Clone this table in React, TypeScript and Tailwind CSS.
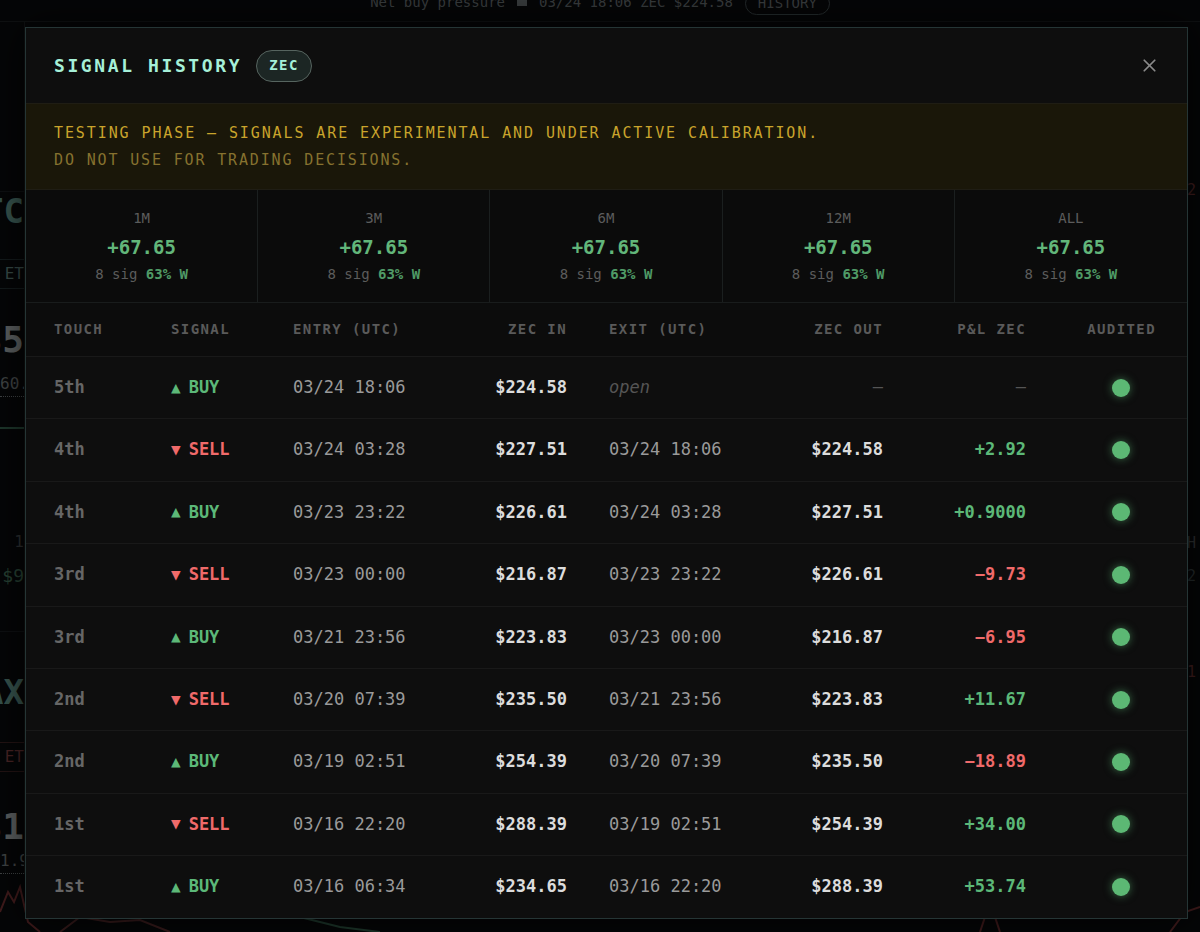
import { X } from 'lucide-react'

type Row = {
  touch: string
  side: 'BUY' | 'SELL'
  entry: string
  zecIn: string
  exit: string | null
  zecOut: string | null
  pnl: string | null
}

const rows: Row[] = [
  { touch: '5th', side: 'BUY', entry: '03/24 18:06', zecIn: '$224.58', exit: null, zecOut: null, pnl: null },
  { touch: '4th', side: 'SELL', entry: '03/24 03:28', zecIn: '$227.51', exit: '03/24 18:06', zecOut: '$224.58', pnl: '+2.92' },
  { touch: '4th', side: 'BUY', entry: '03/23 23:22', zecIn: '$226.61', exit: '03/24 03:28', zecOut: '$227.51', pnl: '+0.9000' },
  { touch: '3rd', side: 'SELL', entry: '03/23 00:00', zecIn: '$216.87', exit: '03/23 23:22', zecOut: '$226.61', pnl: '-9.73' },
  { touch: '3rd', side: 'BUY', entry: '03/21 23:56', zecIn: '$223.83', exit: '03/23 00:00', zecOut: '$216.87', pnl: '-6.95' },
  { touch: '2nd', side: 'SELL', entry: '03/20 07:39', zecIn: '$235.50', exit: '03/21 23:56', zecOut: '$223.83', pnl: '+11.67' },
  { touch: '2nd', side: 'BUY', entry: '03/19 02:51', zecIn: '$254.39', exit: '03/20 07:39', zecOut: '$235.50', pnl: '-18.89' },
  { touch: '1st', side: 'SELL', entry: '03/16 22:20', zecIn: '$288.39', exit: '03/19 02:51', zecOut: '$254.39', pnl: '+34.00' },
  { touch: '1st', side: 'BUY', entry: '03/16 06:34', zecIn: '$234.65', exit: '03/16 22:20', zecOut: '$288.39', pnl: '+53.74' },
]

const periods = ['1M', '3M', '6M', '12M', 'ALL']

const cols = 'grid grid-cols-[117px_122px_167px_107px_193px_123px_143px_1fr] items-center pl-[28px] pr-[31px]'

function Backdrop() {
  // dimmed dashboard that sits behind the dialog
  return (
    <div className="h-[932px] w-[1200px] overflow-hidden bg-[#050607] opacity-60">
      <div className="flex h-[30px] items-start justify-center gap-3 border-b border-[#16191a] -mt-[8px] text-[14px] text-[#5b6062]">
        <span>Net buy pressure</span>
        <span className="mt-[4px] h-[10px] w-[10px] bg-[#5b6062]"></span>
        <span>03/24 18:06 ZEC $224.58</span>
        <span className="rounded-full border border-[#3a4446] px-3 text-[#5b6062]">HISTORY</span>
      </div>
      <div className="flex">
        <div className="flex w-[25px] flex-col overflow-hidden border-r border-[#16191a]">
          <div className="h-[170px] border-b border-[#14181a]"></div>
          <div className="flex h-[440px] flex-col items-end border-b border-[#14181a]">
            <div className="mt-[2px] text-[34px] font-bold leading-none text-[#5a8a80]">TC</div>
            <div className="mt-[31px] w-full border-y border-[#1f2a2a] py-[2px] text-right text-[16px] text-[#5a7a74]">ET</div>
            <div className="mt-[33px] text-[36px] font-bold leading-none text-[#9aa0a0]">$5</div>
            <div className="mt-[14px] w-full border-b border-dotted border-[#6a7070] text-right text-[16px] text-[#6a7070]">60.</div>
            <div className="mt-[30px] h-[2px] w-full bg-[#2f5a45]"></div>
            <div className="mt-[101px] text-[16px] text-[#4a4e50]">1</div>
            <div className="mt-[8px] text-[18px] text-[#3f6a52]">$9</div>
          </div>
          <div className="flex flex-col items-end">
            <div className="mt-[43px] text-[34px] font-bold leading-none text-[#5a8a80]">AX</div>
            <div className="mt-[33px] w-full border-y border-[#3a1e1e] py-[2px] text-right text-[16px] text-[#7a3a3a]">ET</div>
            <div className="mt-[37px] text-[36px] font-bold leading-none text-[#9aa0a0]">$1</div>
            <div className="mt-[4px] w-full border-b border-dotted border-[#6a7070] text-right text-[16px] text-[#6a7070]">1.9</div>
          </div>
        </div>
        <div className="flex-1"></div>
        <div className="flex w-[13px] flex-col text-[15px] text-[#6a2f2f]">
          <div className="mt-[157px]">2</div>
          <div className="mt-[330px] text-[#4a4e50]">H</div>
          <div className="mt-[11px] text-[#3a4446]">2</div>
          <div className="mt-[73px]">1</div>
        </div>
      </div>
      <svg className="absolute bottom-0 left-0" width="1200" height="60" viewBox="0 0 1200 60">
        <path d="M0 40 L8 20 L14 30 L20 15 L28 50 L40 60" stroke="#6a2a2a" strokeWidth="2" fill="none" />
        <path d="M60 60 L80 45 L110 50 L140 48 L170 60" stroke="#5a2a2a" strokeWidth="2" fill="none" />
        <path d="M260 30 L300 45 L340 55 L380 60" stroke="#2f5a45" strokeWidth="2" fill="none" />
        <path d="M980 60 L990 30 L1000 60 M1170 60 L1185 40 L1200 35" stroke="#6a2a2a" strokeWidth="2" fill="none" />
      </svg>
    </div>
  )
}

function StatCell({ label, last }: { label: string; last: boolean }) {
  return (
    <div className={`flex flex-col items-center pt-[19px] ${last ? '' : 'border-r border-[#1b1f1f]'}`}>
      <div className="text-[14px] leading-[18px] text-[#5c5c5c]">{label}</div>
      <div className="mt-[8px] text-[19px] font-bold leading-[24px] text-[#62b67a]">+67.65</div>
      <div className="mt-[6px] text-[14px] leading-[18px] text-[#5c5c5c]">
        8 sig <span className="font-semibold text-[#4f9a66]">63% W</span>
      </div>
    </div>
  )
}

function SignalRow({ r }: { r: Row }) {
  const buy = r.side === 'BUY'
  const neg = r.pnl?.startsWith('-')
  return (
    <div className={`${cols} h-[62.4px] border-t border-[#191919] text-[17px]`}>
      <div className="font-bold text-[#666]">{r.touch}</div>
      <div className={`flex items-center gap-[8px] font-bold ${buy ? 'text-[#5cb878]' : 'text-[#f06a6a]'}`}>
        <span className="text-[16px]">{buy ? '▲' : '▼'}</span>
        <span>{r.side}</span>
      </div>
      <div className="text-[#9a9a9a]">{r.entry}</div>
      <div className="text-right font-bold text-[#dcdcdc]">{r.zecIn}</div>
      <div className="pl-[42px]">
        {r.exit ? <span className="text-[#9a9a9a]">{r.exit}</span> : <span className="italic text-[#555]">open</span>}
      </div>
      <div className="text-right font-bold text-[#dcdcdc]">
        {r.zecOut ?? <span className="font-normal text-[#555]">—</span>}
      </div>
      <div className={`text-right font-semibold ${r.pnl ? (neg ? 'text-[#f06a6a]' : 'text-[#5cb878]') : ''}`}>
        {r.pnl ? r.pnl.replace('-', '−') : <span className="font-normal text-[#555]">—</span>}
      </div>
      <div className="flex justify-end">
        <div className="flex w-[70px] justify-center">
          <span className="h-[18px] w-[18px] rounded-full bg-[#5cb874] shadow-[0_0_8px_rgba(92,184,116,0.55)]"></span>
        </div>
      </div>
    </div>
  )
}

export default function App() {
  return (
    <div className="relative h-[932px] w-[1200px] overflow-hidden bg-[#050607] font-['DejaVu_Sans_Mono',monospace]">
      <Backdrop />

      {/* Signal history dialog */}
      <div className="absolute left-[25px] top-[27px] w-[1163px] border border-[#253535] bg-[#0e0e0e] shadow-[0_0_40px_rgba(0,0,0,0.8)]">
        <div className="flex h-[75px] items-center justify-between pl-[28px] pr-[27px]">
          <div className="flex items-center gap-[14px]">
            <h1 className="text-[18px] font-bold tracking-[2.6px] text-[#a6f0d8]">SIGNAL HISTORY</h1>
            <span className="flex h-[32px] items-center rounded-full border border-[#56645f] bg-[#1c2624] px-[12px] text-[14px] font-bold tracking-[1.5px] text-[#a6f0d8]">
              ZEC
            </span>
          </div>
          <X size={21} strokeWidth={2} className="text-[#8a8a8a]" />
        </div>

        <div className="flex h-[87px] flex-col justify-center border-y border-[#1f1d14] bg-[#1a1709] pl-[28px]">
          <div className="text-[15px] leading-[22px] tracking-[1.9px] text-[#c9a42c]">
            TESTING PHASE — SIGNALS ARE EXPERIMENTAL AND UNDER ACTIVE CALIBRATION.
          </div>
          <div className="mt-[5px] text-[15px] leading-[22px] tracking-[1.85px] text-[#86722f]">
            DO NOT USE FOR TRADING DECISIONS.
          </div>
        </div>

        <div className="grid h-[113px] grid-cols-5 border-b border-[#191c1c] bg-[#0b0b0b]">
          {periods.map((p, i) => (
            <StatCell key={p} label={p} last={i === periods.length - 1} />
          ))}
        </div>

        <div className={`${cols} h-[53px] bg-[#0c0c0c] text-[14px] font-semibold tracking-[1.4px] text-[#5a5a5a]`}>
          <div>TOUCH</div>
          <div>SIGNAL</div>
          <div>ENTRY (UTC)</div>
          <div className="text-right">ZEC IN</div>
          <div className="pl-[42px]">EXIT (UTC)</div>
          <div className="text-right">ZEC OUT</div>
          <div className="text-right">P&amp;L ZEC</div>
          <div className="text-right">AUDITED</div>
        </div>

        {rows.map((r, i) => (
          <SignalRow key={i} r={r} />
        ))}
      </div>
    </div>
  )
}
